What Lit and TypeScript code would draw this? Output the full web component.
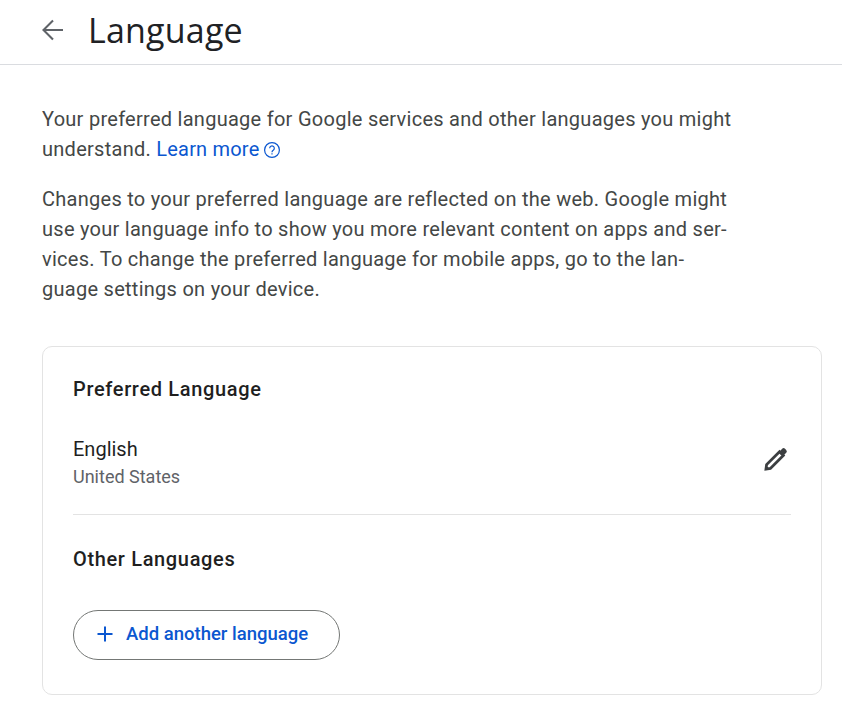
import { LitElement, html, css } from "lit";
import { customElement } from "lit/decorators.js";

@customElement("app-root")
export class AppRoot extends LitElement {
  static styles = css`
    :host { display: block; font-family: Roboto, "Noto Sans", sans-serif; color: #444746; background: #fff; height: 709px; overflow: hidden; }
    .header { display: flex; align-items: center; height: 60px; padding: 0 0 4px 41px; border-bottom: 1px solid #dadce0; gap: 23px; }
    .back { width: 24px; height: 24px; display: block; fill: none; stroke: #5f6368; stroke-width: 2.1; }
    h1 { margin: 0; font-size: 34px; font-weight: 400; color: #202124; line-height: 60px; letter-spacing: 0.2px; font-family: "Open Sans", Roboto, sans-serif; }
    .content { padding: 39px 20px 0 42px; }
    p { margin: 0 0 20px; font-size: 20px; line-height: 30px; max-width: 720px; letter-spacing: 0.27px; }
    a { color: #0b57d0; text-decoration: none; letter-spacing: 0.2px; }
    .help { width: 18px; height: 18px; vertical-align: -3px; margin-left: 4px; fill: none; stroke: #0b57d0; stroke-width: 1.2; }
    .card { margin-top: 42px; height: 349px; border: 1px solid #e3e3e3; border-radius: 10px; box-sizing: border-box; padding: 27px 30px 0; }
    h2 { margin: 0; font-size: 20px; line-height: 30px; font-weight: 500; letter-spacing: 0.65px; color: #1f1f1f; }
    .row { display: flex; align-items: center; justify-content: space-between; margin-top: 30px; padding-bottom: 24px; border-bottom: 1px solid #e3e3e3; }
    .lang { font-size: 20px; line-height: 30px; color: #1f1f1f; }
    .region { font-size: 18px; line-height: 26px; color: #5f6368; }
    .edit { width: 24px; height: 24px; display: block; margin: -6px 3px 0 0; fill: none; stroke: #3c3f41; stroke-width: 2.8; }
    .edit .tip { fill: #3c3f41; stroke: none; }
    .other { margin-top: 29px; }
    .add { margin-top: 36px; display: flex; align-items: center; gap: 9px; height: 50px; width: 267px; box-sizing: border-box; padding: 0 0 2px 19px; border: 1px solid #747775; border-radius: 25px; color: #0b57d0; font-size: 18.5px; font-weight: 500; }
    .add svg { width: 24px; height: 24px; fill: none; stroke: #0b57d0; stroke-width: 2; }
  `;
  render() {
    return html`
      <div class="header">
        <svg class="back" viewBox="0 0 24 24"><path d="M22 12H3M12 2.500L2.500 12l9.500 9.500"/></svg>
        <h1>Language</h1>
      </div>
      <div class="content">
        <p>Your preferred language for Google services and other languages you might<br>understand. <a>Learn more<svg class="help" viewBox="0 0 18 18"><circle cx="9" cy="9" r="7.400"/><path d="M6.700 7.200a2.300 2.300 0 1 1 3.500 2c-.8.500-1.200 1-1.200 2"/><path d="M9 12.300v1.200"/></svg></a></p>
        <p>Changes to your preferred language are reflected on the web. Google might<br>use your language info to show you more relevant content on apps and ser-<br>vices. To change the preferred language for mobile apps, go to the lan-<br>guage settings on your device.</p>
        <div class="card">
          <h2>Preferred Language</h2>
          <div class="row">
            <div><div class="lang">English</div><div class="region">United States</div></div>
            <svg class="edit" viewBox="0 0 24 24"><path d="M2 22l.6-4.400L15.500 4.700l3.800 3.800L6.400 21.400z"/><path class="tip" d="M15.500 4.500l2.700-2.700a2 2 0 0 1 2.800 0l1.200 1.200a2 2 0 0 1 0 2.800l-2.700 2.700z"/></svg>
          </div>
          <h2 class="other">Other Languages</h2>
          <div class="add"><svg viewBox="0 0 24 24"><path d="M12 4.500v15M4.500 12h15"/></svg>Add another language</div>
        </div>
      </div>`;
  }
}
